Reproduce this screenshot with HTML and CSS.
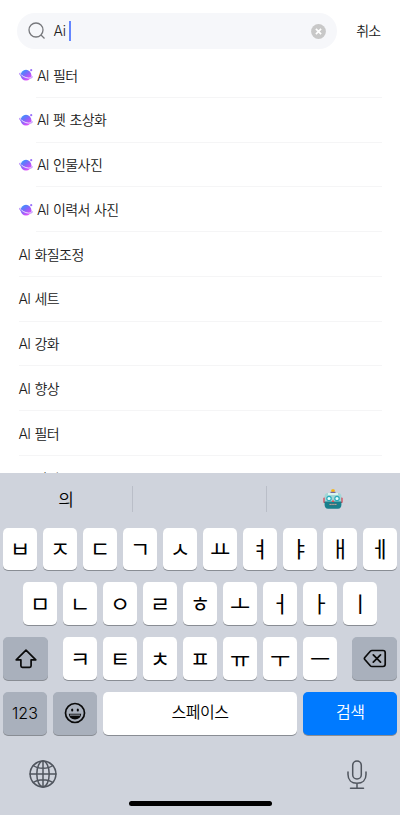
FILE: index.html
```
<!DOCTYPE html>
<html lang="ko">
<head>
<meta charset="utf-8">
<meta name="viewport" content="width=device-width, initial-scale=1">
<title>검색</title>
<link rel="stylesheet" href="styles.css">
</head>
<body>
<svg class="defs" width="0" height="0">
  <defs>
    <linearGradient id="planet-fill" x1="0" y1="0" x2="0.7" y2="1">
      <stop offset="0" stop-color="#1fa2ff"/><stop offset="0.5" stop-color="#8068fa"/><stop offset="1" stop-color="#ee48fa"/>
    </linearGradient>
    <symbol id="planet" viewBox="0 0 14 14">
      <circle cx="7" cy="7.200" r="5.400" fill="url(#planet-fill)"/>
      <path d="M1.500 5.200C0 5.100.300 6 1 6.800c2.800 2.900 8.900 4.700 11.600 3.100.7-.5.600-1.200.1-2" fill="none" stroke="#a46cfa" stroke-width=".9"/>
      <path d="M2.400 7c2.400 2.300 6.500 3.600 9.400 2.900" fill="none" stroke="#fff" stroke-width=".8"/>
      <circle cx="12.200" cy="2.200" r="1.100" fill="#9a70fa"/>
    </symbol>
  </defs>
</svg>
<div class="screen">
  <header class="search">
    <div class="field">
      <svg class="lens" viewBox="0 0 18 18"><circle cx="8" cy="8" r="7" /><path d="m13 13 3.500 3.500"/></svg>
      <span class="query">Ai</span><i class="caret"></i>
      <svg class="clear" viewBox="0 0 15 15"><circle cx="7.500" cy="7.500" r="7.400"/><path d="m4.900 4.900 5.200 5.200m0-5.200-5.200 5.200"/></svg>
    </div>
    <span class="cancel">취소</span>
  </header>
  <main class="results">
    <div class="row ai"><svg><use href="#planet"/></svg><span>AI 필터</span></div>
    <div class="row ai"><svg><use href="#planet"/></svg><span>AI 펫 초상화</span></div>
    <div class="row ai"><svg><use href="#planet"/></svg><span>AI 인물사진</span></div>
    <div class="row ai"><svg><use href="#planet"/></svg><span>AI 이력서 사진</span></div>
    <div class="row"><span>AI 화질조정</span></div>
    <div class="row"><span>AI 세트</span></div>
    <div class="row"><span>AI 강화</span></div>
    <div class="row"><span>AI 향상</span></div>
    <div class="row"><span>AI 필터</span></div>
    <div class="row peek"><span>AI 필터</span></div>
  </main>
  <section class="keyboard">
    <div class="suggestions">
      <span>의</span><span></span>
      <span><svg class="robot" viewBox="0 0 20 20">
        <rect x="8.300" y=".3" width="3.400" height="3" rx="1" fill="#f6b413"/><rect x="7.500" y="2.800" width="5" height="1.600" fill="#76689a"/>
        <rect x=".4" y="8.500" width="3" height="5.500" rx="1" fill="#d83b4c"/><rect x="16.600" y="8.500" width="3" height="5.500" rx="1" fill="#d83b4c"/>
        <path d="M1.600 7c0-2 1.500-3 3.500-3h9.800c2 0 3.500 1 3.500 3v6H1.600z" fill="#a3d6d6"/>
        <path d="M1.600 12.500h16.800v3c0 2.500-1 4.200-3.500 4.200H5.100c-2.500 0-3.500-1.700-3.500-4.200z" fill="#187f8c"/>
        <path d="M5 4h10v2H5z" fill="#d9f4ef"/>
        <circle cx="6" cy="9.500" r="2.200" fill="#e9ffff" stroke="#28aabb" stroke-width="1.200"/><circle cx="14" cy="9.500" r="2.200" fill="#e9ffff" stroke="#28aabb" stroke-width="1.200"/>
        <path d="m10 10.500 1.400 2.500H8.600z" fill="#e44b50"/>
        <rect x="6" y="14.400" width="8" height="2" rx=".5" fill="#426a74"/><path d="M6.600 15.400h7" stroke="#e5cdb9" stroke-width="1" stroke-dasharray="1.100 .8"/>
      </svg></span>
    </div>
    <div class="keys top">
      <b>ㅂ</b><b>ㅈ</b><b>ㄷ</b><b>ㄱ</b><b>ㅅ</b><b>ㅛ</b><b>ㅕ</b><b>ㅑ</b><b>ㅐ</b><b>ㅔ</b>
    </div>
    <div class="keys middle">
      <b>ㅁ</b><b>ㄴ</b><b>ㅇ</b><b>ㄹ</b><b>ㅎ</b><b>ㅗ</b><b>ㅓ</b><b>ㅏ</b><b>ㅣ</b>
    </div>
    <div class="keys lower">
      <b class="dark wide"><svg width="24" height="22" viewBox="0 0 24 22"><path d="M12 2.200 2.200 11.800h4.700v6q0 1.500 1.500 1.500h7.200q1.500 0 1.500-1.500v-6h4.700z"/></svg></b>
      <div class="letters"><b>ㅋ</b><b>ㅌ</b><b>ㅊ</b><b>ㅍ</b><b>ㅠ</b><b>ㅜ</b><b>ㅡ</b></div>
      <b class="dark wide"><svg width="24" height="20" viewBox="0 0 24 20"><path d="M9 1.500h11q2.200 0 2.200 2.200v11.600q0 2.200-2.200 2.200H9q-1 0-1.700-.8L1.800 10.500q-.8-1 0-2l5.500-6.200q.7-.8 1.700-.8zM10.300 5.800l7.200 7.400m0-7.400-7.200 7.400"/></svg></b>
    </div>
    <div class="keys bottom">
      <b class="dark digits">123</b>
      <b class="dark emoji"><svg width="22" height="22" viewBox="0 0 22 22"><circle cx="11" cy="11" r="9.500"/><path d="M4.800 11.800h12.400c-.3 3.700-2.800 5.600-6.200 5.600s-5.900-1.900-6.200-5.600z" fill="#0a0a0a" stroke="none"/><path d="M6.300 13.100h9.400" stroke="#a9b0bc" stroke-width="1"/><ellipse cx="8.200" cy="8" rx="1.100" ry="1.500" fill="#0a0a0a" stroke="none"/><ellipse cx="13.800" cy="8" rx="1.100" ry="1.500" fill="#0a0a0a" stroke="none"/></svg></b>
      <b class="space">스페이스</b>
      <b class="submit">검색</b>
    </div>
    <footer class="tools">
      <svg width="28" height="28" viewBox="0 0 28 28"><circle cx="14" cy="14" r="12.900"/><ellipse cx="14" cy="14" rx="6.200" ry="12.900"/><path d="M14 1v26M1 14h26M4.300 5.500c5 3.800 14.400 3.800 19.400 0M4.300 22.500c5-3.800 14.400-3.800 19.400 0"/></svg>
      <svg width="20" height="30" viewBox="0 0 20 30"><rect x="5.700" y="1" width="8.600" height="18" rx="4.300"/><path d="M1 12v2.500c0 5.500 3.500 8.800 9 8.800s9-3.300 9-8.800V12M10 23.300v5M3.500 28.300h13"/></svg>
    </footer>
    <div class="home"></div>
  </section>
</div>
</body>
</html>
```
FILE: styles.css
```
* { box-sizing: border-box; }
body { margin: 0; background: #fff; font-family: Inter, "Noto Sans CJK KR", sans-serif; font-weight: 350; color: #202020; }
.defs { display: block; }
.screen { width: 400px; height: 815px; display: flex; flex-direction: column; overflow: hidden; }
.search { height: 53px; flex: none; display: flex; align-items: flex-start; padding: 13px 19.500px 0 16.500px; justify-content: space-between; }
.field { width: 320.500px; height: 36px; border-radius: 18px; background: #f6f7fa; display: flex; align-items: center; padding: 0 11px 0 11.500px; font-size: 14px; }
.lens { width: 18px; height: 18px; fill: none; stroke: #77787c; stroke-width: 1.300; }
.query { margin-left: 7.500px; letter-spacing: -.2px; padding-bottom: 1px; }
.caret { width: 2px; height: 20px; background: #6486ff; margin-left: 3px; }
.clear { width: 15px; height: 15px; margin-left: auto; fill: #c8c8c8; }
.clear path { stroke: #fff; stroke-width: 1.700; }
.cancel { line-height: 36px; font-size: 14px; letter-spacing: -.7px; }
.results { height: 420px; flex: none; overflow: hidden; padding-left: 18.500px; }
.row { height: 44.780px; display: flex; align-items: center; width: 363.500px; font-size: 14px; letter-spacing: -.6px; word-spacing: .8px; border-bottom: 1px solid #f5f5f6; }
.row span { line-height: 20px; padding-top: 1.400px; }
.peek span { padding-top: 2px; }
.ai { width: 346px; margin-left: 17.500px; }
.ai svg { width: 14px; height: 14px; flex: none; margin-left: -17.500px; margin-right: 4.500px; margin-top: 1px; }
.keyboard { height: 342px; flex: none; background: #cfd3dc; color: #000; }
.suggestions { height: 54.500px; display: grid; grid-template-columns: 133.300px 133.300px 1fr; padding-top: 13px; }
.suggestions span { height: 26px; display: flex; align-items: center; justify-content: center; font-size: 17px; border-right: 1px solid #babec8; padding-bottom: 2px; }
.suggestions span:last-child { border: 0; padding: 0; }
.robot { width: 20px; height: 20px; }
.keys { height: 43px; margin-bottom: 11.900px; display: flex; justify-content: center; gap: 6px; }
.keys b { width: 34px; height: 42.500px; border-radius: 5px; background: #fff; box-shadow: 0 1px 0 #898d94; display: flex; align-items: center; justify-content: center; font-size: 22px; font-weight: 400; line-height: 30px; }
.keys svg { fill: none; stroke: #0a0a0a; stroke-width: 1.700; stroke-linejoin: round; stroke-linecap: round; }
.lower, .bottom { padding: 0 3px; justify-content: space-between; }
.letters { display: flex; gap: 6px; }
.keys .dark { background: #a9b0bc; }
.keys .wide { width: 45px; }
.keys .digits { width: 44px; font-size: 16px; font-weight: 350; }
.keys .emoji { width: 44px; }
.keys .space { width: 195px; font-size: 16px; font-weight: 350; letter-spacing: -.5px; padding-bottom: 3px; }
.keys .submit { width: 94px; background: #007aff; color: #fff; font-size: 16px; font-weight: 350; letter-spacing: -.5px; padding-bottom: 3px; }
.tools { height: 54px; padding: 13px 33px 0 29px; display: flex; justify-content: space-between; }
.tools svg { fill: none; stroke: #50555e; stroke-width: 1.500; stroke-linecap: round; }
.home { width: 143px; height: 5px; margin: 0 auto; border-radius: 3px; background: #000; }
```
